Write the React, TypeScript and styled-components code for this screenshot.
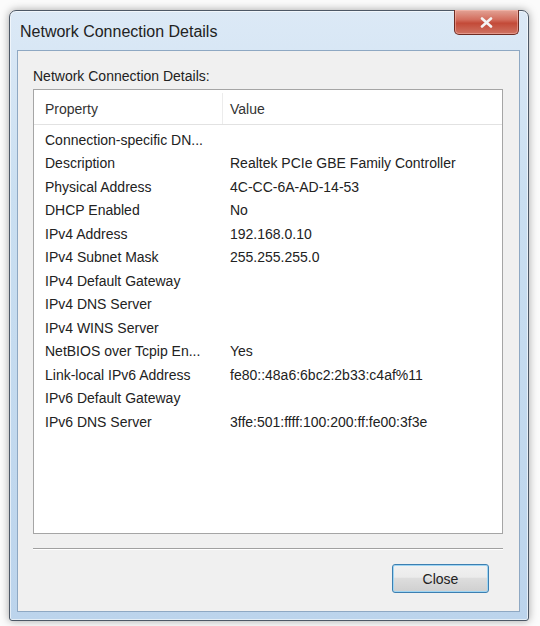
import { FC } from 'react';
import styled, { createGlobalStyle } from 'styled-components';

interface Detail {
	property: string;
	value: string;
}

const details: Detail[] = [
	{ property: 'Connection-specific DN...', value: '' },
	{ property: 'Description', value: 'Realtek PCIe GBE Family Controller' },
	{ property: 'Physical Address', value: '4C-CC-6A-AD-14-53' },
	{ property: 'DHCP Enabled', value: 'No' },
	{ property: 'IPv4 Address', value: '192.168.0.10' },
	{ property: 'IPv4 Subnet Mask', value: '255.255.255.0' },
	{ property: 'IPv4 Default Gateway', value: '' },
	{ property: 'IPv4 DNS Server', value: '' },
	{ property: 'IPv4 WINS Server', value: '' },
	{ property: 'NetBIOS over Tcpip En...', value: 'Yes' },
	{ property: 'Link-local IPv6 Address', value: 'fe80::48a6:6bc2:2b33:c4af%11' },
	{ property: 'IPv6 Default Gateway', value: '' },
	{ property: 'IPv6 DNS Server', value: '3ffe:501:ffff:100:200:ff:fe00:3f3e' },
];

const App: FC = () => {
	return (
		<>
			<GlobalStyle />
			<Page>
				<Window>
					<TitleBar>
						<Title>Network Connection Details</Title>
						<CloseButton aria-label="Close">
							<svg width="13" height="11" viewBox="0 0 13 11">
								<path
									d="M2 1.5 L11 9.5 M11 1.5 L2 9.5"
									stroke="#f4f4f4"
									strokeWidth="2.6"
									strokeLinecap="round"
								/>
							</svg>
						</CloseButton>
					</TitleBar>
					<Client>
						<Label>Network Connection Details:</Label>
						<ListBox>
							<Header>
								<HeaderCell width={189} divider>
									Property
								</HeaderCell>
								<HeaderCell inset={7}>Value</HeaderCell>
							</Header>
							<Rows>
								{details.map((d) => (
									<Row key={d.property}>
										<Cell width={185}>{d.property}</Cell>
										<Cell>{d.value}</Cell>
									</Row>
								))}
							</Rows>
						</ListBox>
						<Separator />
						<Footer>
							<Button>Close</Button>
						</Footer>
					</Client>
				</Window>
			</Page>
		</>
	);
};

const GlobalStyle = createGlobalStyle`
	body {
		margin: 0;
		background: #fbfbfb;
		font-family: 'Liberation Sans', Arial, sans-serif;
	}
`;

const Page = styled.div`
	width: 540px;
	height: 626px;
	padding: 10px 0 0 9px;
	box-sizing: border-box;
`;

const Window = styled.div`
	width: 520px;
	height: 611px;
	box-sizing: border-box;
	display: flex;
	flex-direction: column;
	padding: 0 8px 8px 7px;
	border: 1px solid #4d5866;
	border-radius: 7px 7px 3px 3px;
	background: linear-gradient(180deg, #dce9f6 0%, #cadff1 30%, #bcd4ec 100%);
	box-shadow: 0 0 8px rgba(0, 0, 0, 0.35), inset 0 0 0 1px rgba(255, 255, 255, 0.6);
`;

const TitleBar = styled.div`
	height: 39px;
	display: flex;
	justify-content: space-between;
	align-items: flex-start;
	flex-shrink: 0;
`;

const Title = styled.div`
	margin: 12px 0 0 3px;
	font-size: 16px;
	color: #222;
`;

const CloseButton = styled.div`
	width: 65px;
	height: 25px;
	margin: -1px 1px 0 0;
	display: flex;
	align-items: center;
	justify-content: center;
	box-sizing: border-box;
	border: 1px solid #6f2c22;
	border-top: none;
	border-radius: 0 0 5px 5px;
	background: linear-gradient(180deg, #e3a396 0%, #d36e5e 40%, #c34a38 55%, #cf7463 100%);
	box-shadow: inset 0 0 0 1px rgba(255, 200, 190, 0.45);
`;

const Client = styled.div`
	flex: 1;
	display: flex;
	flex-direction: column;
	padding: 16px 14px 0 15px;
	border: 1px solid #8ea8c3;
	background: #f0f0f0;
`;

const Label = styled.div`
	font-size: 14px;
	line-height: 18px;
	color: #222;
	margin-bottom: 4px;
`;

const ListBox = styled.div`
	width: 470px;
	height: 445px;
	box-sizing: border-box;
	border: 1px solid #a5a5a5;
	background: #fff;
`;

const Header = styled.div`
	display: flex;
	height: 35px;
	box-sizing: border-box;
	border-bottom: 1px solid #e2e2e2;
	padding-top: 3px;
`;

const HeaderCell = styled.div<{ width?: number; divider?: boolean; inset?: number }>`
	${(props) => (props.width ? `width: ${props.width}px;` : 'flex: 1;')}
	box-sizing: border-box;
	padding-left: ${(props) => props.inset ?? 11}px;
	display: flex;
	align-items: center;
	font-size: 14px;
	color: #333;
	border-right: ${(props) => (props.divider ? '1px solid #ececec' : 'none')};
`;

const Rows = styled.div`
	padding-top: 3px;
`;

const Row = styled.div`
	display: flex;
	height: 23.5px;
	align-items: center;
	padding-left: 11px;
	font-size: 14px;
	color: #222;
	white-space: nowrap;
`;

const Cell = styled.div<{ width?: number }>`
	${(props) => (props.width ? `width: ${props.width}px;` : 'flex: 1;')}
`;

const Separator = styled.div`
	width: 470px;
	height: 1px;
	margin-top: 14px;
	background: #a0a0a0;
	border-bottom: 1px solid #fff;
`;

const Footer = styled.div`
	display: flex;
	justify-content: flex-end;
	padding: 14px 16px 0 0;
`;

const Button = styled.button`
	width: 97px;
	height: 29px;
	font-family: 'Liberation Sans', Arial, sans-serif;
	font-size: 14px;
	color: #222;
	border: 1px solid #3c7fb1;
	border-radius: 3px;
	background: linear-gradient(180deg, #f2f2f2 0%, #ebebeb 45%, #dddddd 50%, #cfcfcf 100%);
	box-shadow: inset 0 0 0 1px #9fd5f3;
`;

export default App;
